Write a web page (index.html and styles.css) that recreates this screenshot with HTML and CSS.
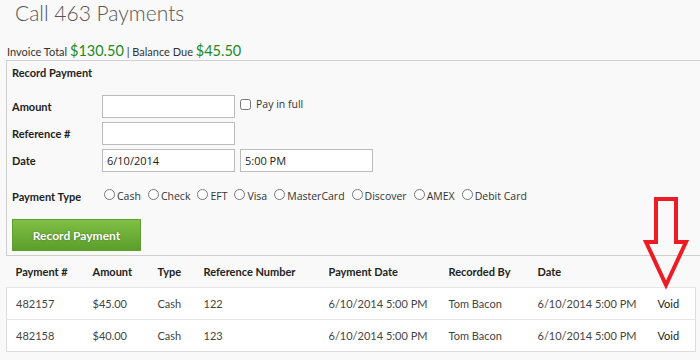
FILE: index.html
```html
<!DOCTYPE html>
<html lang="en">
<head>
    <meta charset="UTF-8">
    <title>Call 463 Payments</title>
    <link rel="stylesheet" href="styles.css">
</head>
<body>

<div class="page">
    <h1 class="title">Call 463 Payments</h1>

    <div class="totals">
        Invoice Total <span class="money">$130.50</span> | Balance Due <span class="money">$45.50</span>
    </div>

    <div class="panel">
        <div class="panel-title">Record Payment</div>

        <div class="form-grid">
            <label class="field-label" for="amount">Amount</label>
            <div class="field">
                <input type="text" id="amount" class="text-input">
                <label class="check"><input type="checkbox"> Pay in full</label>
            </div>

            <label class="field-label" for="reference">Reference #</label>
            <div class="field">
                <input type="text" id="reference" class="text-input">
            </div>

            <label class="field-label" for="date">Date</label>
            <div class="field">
                <input type="text" id="date" class="text-input" value="6/10/2014">
                <input type="text" class="text-input" value="5:00 PM">
            </div>
        </div>

        <div class="type-row">
            <span class="field-label">Payment Type</span>
            <div class="radios">
                <label><input type="radio" name="ptype"> Cash</label>
                <label><input type="radio" name="ptype"> Check</label>
                <label><input type="radio" name="ptype"> EFT</label>
                <label><input type="radio" name="ptype"> Visa</label>
                <label><input type="radio" name="ptype"> MasterCard</label>
                <label><input type="radio" name="ptype"> Discover</label>
                <label><input type="radio" name="ptype"> AMEX</label>
                <label><input type="radio" name="ptype"> Debit Card</label>
            </div>
        </div>

        <button class="record-btn">Record Payment</button>
    </div>

    <table class="payments">
        <colgroup>
            <col style="width:77px">
            <col style="width:65px">
            <col style="width:46px">
            <col style="width:125px">
            <col style="width:120px">
            <col style="width:89px">
            <col style="width:120px">
            <col style="width:47px">
        </colgroup>
        <thead>
            <tr>
                <th>Payment #</th>
                <th>Amount</th>
                <th>Type</th>
                <th>Reference Number</th>
                <th>Payment Date</th>
                <th>Recorded By</th>
                <th>Date</th>
                <th></th>
            </tr>
        </thead>
        <tbody>
            <tr>
                <td>482157</td>
                <td>$45.00</td>
                <td>Cash</td>
                <td>122</td>
                <td>6/10/2014 5:00 PM</td>
                <td>Tom Bacon</td>
                <td>6/10/2014 5:00 PM</td>
                <td class="void">Void</td>
            </tr>
            <tr>
                <td>482158</td>
                <td>$40.00</td>
                <td>Cash</td>
                <td>123</td>
                <td>6/10/2014 5:00 PM</td>
                <td>Tom Bacon</td>
                <td>6/10/2014 5:00 PM</td>
                <td class="void">Void</td>
            </tr>
        </tbody>
    </table>

    <!-- callout arrow pointing at the Void links -->
    <svg class="arrow" width="700" height="360" viewBox="0 0 700 360">
        <polygon points="656,199 676,199 676,242 686,242 666,285 646,242 656,242"
                 fill="none" stroke="#ed1c24" stroke-width="4" stroke-linejoin="miter"/>
    </svg>
</div>

</body>
</html>
```

FILE: styles.css
```css
html, body {
    margin: 0;
    padding: 0;
    background-color: #f9f9f9;
}
body {
    font-family: Lato, 'Open Sans', sans-serif;
    color: #333;
    overflow: hidden;
}
.page {
    position: relative;
    width: 700px;
    height: 360px;
}
.title {
    margin: 0;
    padding: 3px 0 0 15px;
    font-size: 21px;
    line-height: 19px;
    font-weight: 300;
    color: #555;
}
.totals {
    margin-top: 21px;
    padding-left: 7px;
    font-size: 11px;
    line-height: 16px;
    color: #333;
}
.money {
    font-size: 14.5px;
    color: #1e8a1e;
}
.panel {
    margin-left: 6px;
    width: 700px;
    border: 1px solid #cfcfcf;
    padding: 5px 0 4px 5px;
}
.panel-title {
    font-size: 11px;
    font-weight: bold;
    line-height: 14px;
    color: #222;
}
.form-grid {
    display: grid;
    grid-template-columns: 90px 1fr;
    row-gap: 4px;
    margin-top: 15px;
}
.field-label {
    font-size: 11px;
    font-weight: bold;
    color: #222;
    align-self: center;
}
.field {
    display: flex;
    align-items: center;
    gap: 5px;
}
.text-input {
    box-sizing: border-box;
    width: 133px;
    height: 23px;
    margin: 0;
    padding: 0 4px;
    border: 1px solid #bbb;
    background: #fff;
    font-family: 'Open Sans', sans-serif;
    font-size: 11px;
    color: #222;
}
.check {
    display: flex;
    align-items: center;
    gap: 5px;
    font-family: 'Open Sans', sans-serif;
    font-size: 10.5px;
    color: #333;
    margin-top: -5px;
}
.check input {
    margin: 0;
    width: 11px;
    height: 11px;
}
.type-row {
    display: grid;
    grid-template-columns: 90px 1fr;
    margin-top: 14px;
    height: 20px;
    align-items: center;
}
.radios {
    display: flex;
    gap: 7px;
    padding-left: 2px;
    font-family: 'Open Sans', sans-serif;
    font-size: 10.5px;
    color: #333;
}
.radios label {
    display: flex;
    align-items: center;
    gap: 2px;
}
.radios input {
    margin: 0 0 3px 0;
    width: 11px;
    height: 11px;
}
.record-btn {
    display: block;
    margin-top: 13px;
    width: 129px;
    height: 32px;
    border: 1px solid #5f9f30;
    background: linear-gradient(#7fbf45, #5b9e2b);
    color: #fff;
    font-family: Lato, sans-serif;
    font-size: 12px;
    font-weight: bold;
    text-shadow: 0 0 2px rgba(0,0,0,0.35);
}
.payments {
    margin-left: 6px;
    width: 689px;
    table-layout: fixed;
    border-collapse: collapse;
    font-size: 11px;
}
.payments th {
    height: 31px;
    padding: 0 0 0 9px;
    text-align: left;
    font-weight: bold;
    color: #222;
    vertical-align: middle;
}
.payments tbody {
    border: 1px solid #ddd;
    background: #fff;
}
.payments td {
    height: 31px;
    padding: 0 0 0 9px;
    border-top: 1px solid #e6e6e6;
    color: #444;
    white-space: nowrap;
}
.payments td.void {
    color: #222;
}
.arrow {
    position: absolute;
    left: 0;
    top: 0;
    pointer-events: none;
}
```
